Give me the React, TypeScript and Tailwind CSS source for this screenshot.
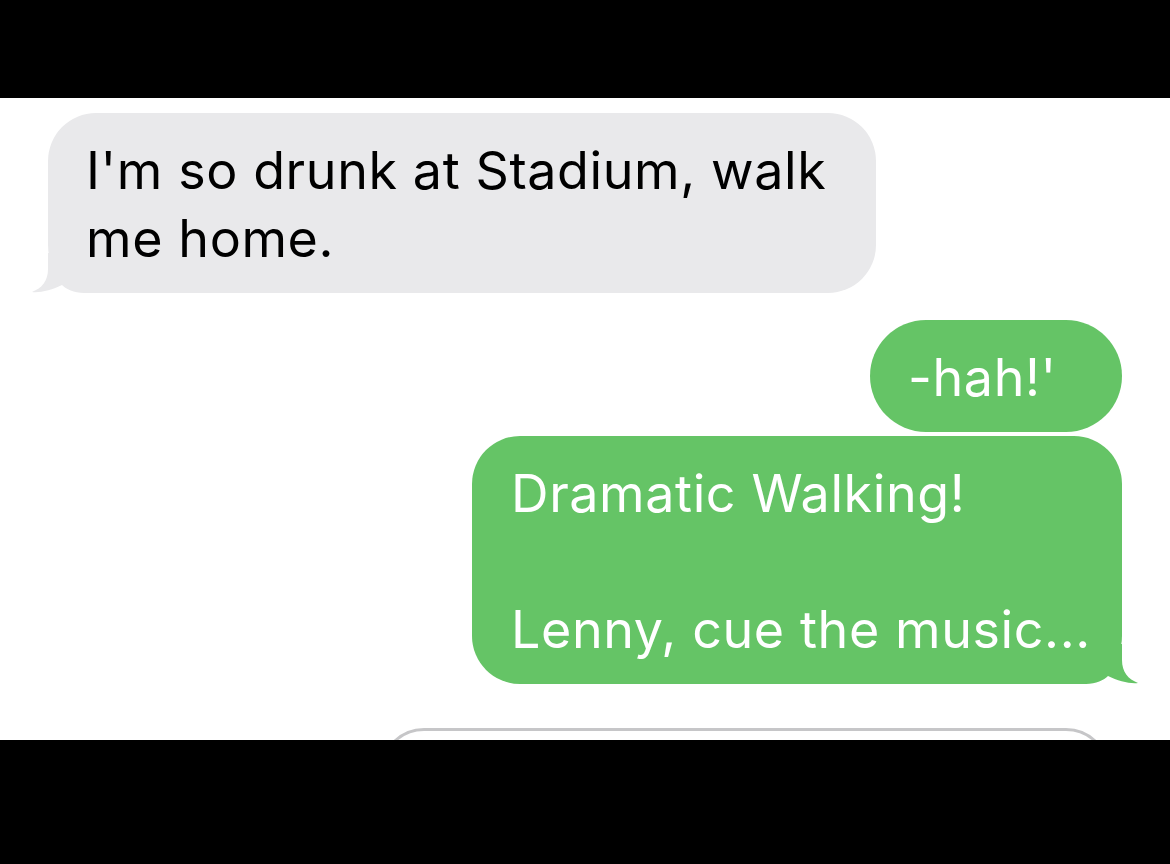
import React from 'react';

function LeftTail() {
  return (
    <svg className="absolute left-[-16px] bottom-0" width="64" height="40" viewBox="0 0 64 40" fill="#e9e9eb">
      <path d="M16 0 L16 16 C16 28 10 35 0 39 C8 40 20 37 30 32 C34 36 42 40 52 40 L64 40 L64 0 Z" />
    </svg>
  );
}

function RightTail() {
  return (
    <svg className="absolute right-[-16px] bottom-0" width="64" height="40" viewBox="0 0 64 40" fill="#65c466">
      <path d="M48 0 L48 16 C48 28 54 35 64 39 C56 40 44 37 34 32 C30 36 22 40 12 40 L0 40 L0 0 Z" />
    </svg>
  );
}

export default function App() {
  return (
    <div className="w-[1170px] h-[864px] flex flex-col bg-black" style={{ fontFamily: 'Inter, "Noto Sans", sans-serif' }}>
      <div className="h-[98px] bg-black" />
      <div className="h-[642px] bg-white overflow-hidden flex flex-col pt-[15px]">
        {/* incoming */}
        <div className="ml-[48px] relative w-[828px] bg-[#e9e9eb] rounded-[48px] pl-[38px] pr-6 pt-[24px] pb-[20px] text-[52px] leading-[68px] text-black tracking-[0.6px]">
          <LeftTail />
          <p className="relative z-10">
            I'm so drunk at Stadium, walk
            <br />
            me home.
          </p>
        </div>

        {/* outgoing */}
        <div className="flex flex-col items-end mr-[48px] mt-[27px] gap-[4px]">
          <div className="w-[252px] h-[112px] bg-[#65c466] rounded-full pl-[38px] pt-[24px] text-[52px] leading-[68px] text-white tracking-[0.6px]">
            -hah!'
          </div>
          <div className="relative w-[650px] bg-[#65c466] rounded-[48px] pl-[39px] pr-6 pt-[24px] pb-[20px] text-[52px] leading-[68px] text-white tracking-[0.6px]">
            <RightTail />
            <p className="relative z-10">
              Dramatic Walking!
              <br />
              <br />
              Lenny, cue the music...
            </p>
          </div>
        </div>

        {/* input field */}
        <div className="ml-[380px] w-[730px] mt-[44px] h-[90px] shrink-0 rounded-[44px] border-[3px] border-[#c6c6c8] bg-white" />
      </div>
      <div className="flex-1 bg-black" />
    </div>
  );
}
